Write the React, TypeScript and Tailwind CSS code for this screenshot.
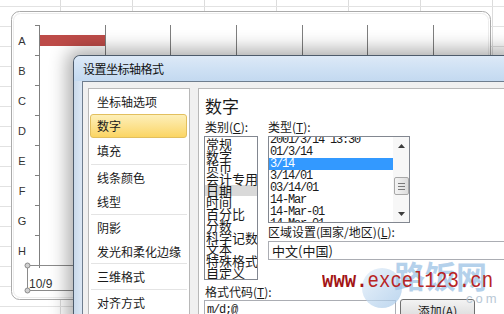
import React from 'react';

const navItems = [
  { label: '坐标轴选项', h: 'h-[24px]' },
  { label: '数字', h: 'h-[24px]', active: true },
  { label: '填充', h: 'h-[26px]', sep: true },
  { label: '线条颜色', h: 'h-[25px]' },
  { label: '线型', h: 'h-[24px]', sep: true },
  { label: '阴影', h: 'h-[25px]' },
  { label: '发光和柔化边缘', h: 'h-[23px]', sep: true },
  { label: '三维格式', h: 'h-[25px]', sep: true },
  { label: '对齐方式', h: 'h-[25px]' },
];

const categories = ['常规', '数字', '货币', '会计专用', '日期', '时间', '百分比', '分数', '科学记数', '文本', '特殊格式', '自定义'];

const types = ['2001/3/14 13:30', '01/3/14', '3/14', '3/14/01', '03/14/01', '14-Mar', '14-Mar-01', '14-Mar-01'];

const mono = "font-['Liberation_Mono',monospace]";

function ChartLayer() {
  const ticks = Array.from({ length: 9 }, (_, i) => 25 + i * 30);
  const labels = ['A', 'B', 'C', 'D', 'E', 'F', 'G', 'H'];
  const grid = [105, 170, 236, 302, 367, 433];
  const sheetCols = [60, 132, 204, 276, 348, 420, 492];
  const sheetRows = Array.from({ length: 16 }, (_, i) => 6 + i * 20);

  return (
    <svg className="absolute inset-0" width={504} height={314}>
      {sheetCols.map((x) => (
        <line key={`c${x}`} x1={x + 0.5} y1={0} x2={x + 0.5} y2={314} stroke="#dcdcdc" />
      ))}
      {sheetRows.map((y) => (
        <line key={`r${y}`} x1={0} y1={y + 0.5} x2={504} y2={y + 0.5} stroke="#e2e2e2" />
      ))}
      <rect x={11.5} y={11.5} width={479} height={288} rx={8} fill="#fff" stroke="#aaaaaa" />
      <rect x={13.5} y={13.5} width={475} height={284} rx={7} fill="none" stroke="#ececec" />
      {grid.map((x) => (
        <line key={x} x1={x + 0.5} y1={25} x2={x + 0.5} y2={265} stroke="#7f7f7f" />
      ))}
      <rect x={40} y={35} width={65} height={11} fill="#bd4b48" />
      <line x1={39.5} y1={25} x2={39.5} y2={268} stroke="#7f7f7f" />
      {ticks.map((y) => (
        <line key={y} x1={35} y1={y + 0.5} x2={40} y2={y + 0.5} stroke="#7f7f7f" />
      ))}
      {labels.map((l, i) => (
        <text key={l} x={22} y={45 + i * 30} fontSize={11} fill="#333" textAnchor="middle" fontFamily="Liberation Sans, sans-serif">
          {l}
        </text>
      ))}
      <line x1={27.5} y1={265.5} x2={110} y2={265.5} stroke="#8a8a8a" />
      <line x1={27.5} y1={290.5} x2={110} y2={290.5} stroke="#8a8a8a" />
      <line x1={27.5} y1={265} x2={27.5} y2={291} stroke="#8a8a8a" />
      <circle cx={27.5} cy={265.5} r={2.5} fill="#d0d0d0" stroke="#8a8a8a" />
      <circle cx={27.5} cy={290.5} r={2.5} fill="#d0d0d0" stroke="#8a8a8a" />
      <text x={29} y={288} fontSize={12} fill="#333" fontFamily="Liberation Sans, sans-serif">10/9</text>
    </svg>
  );
}

function UpArrow() {
  return (
    <svg width="7" height="4" viewBox="0 0 7 4"><path d="M0 4 L3.5 0 L7 4 Z" fill="#3c3c3c" /></svg>
  );
}

function DownArrow() {
  return (
    <svg width="7" height="4" viewBox="0 0 7 4"><path d="M0 0 L3.5 4 L7 0 Z" fill="#3c3c3c" /></svg>
  );
}

export default function App() {
  return (
    <div className="relative w-[504px] h-[314px] overflow-hidden bg-white font-['Noto_Sans_CJK_SC',sans-serif] text-[#1a1a1a]">
      <ChartLayer />

      {/* dialog */}
      <div className="absolute left-[73px] top-[55px] w-[440px] h-[270px] flex flex-col rounded-tl-[7px] border-l border-t border-[#4d5b6b] bg-[#cddff2] shadow-[0_0_18px_6px_rgba(0,0,0,0.32)] overflow-hidden">
        <div className="h-[25px] flex items-center pl-[9px] bg-gradient-to-b from-[#dde9f7] via-[#cfe1f4] to-[#c3d9f0] text-[12px] tracking-[-0.5px] text-[#111]">
          设置坐标轴格式
        </div>
        <div className="flex flex-1">
          <div className="w-[8px] bg-gradient-to-r from-[#c9d9ea] to-[#dbe7f4]" />
          <div className="flex flex-1 gap-[8px] pl-[5px] pt-[6px] bg-[#f0f0f0] border-t border-l border-[#6e7d8e]">
            {/* nav */}
            <div className="w-[102px] border border-[#b8b8b8] bg-white pt-px">
              {navItems.map((it) => (
                <div key={it.label}>
                  {it.active ? (
                    <div className={`${it.h} mx-px mr-[2px] flex items-center px-[6px] text-[12px] rounded-[3px] border border-[#e2bf5e] bg-gradient-to-b from-[#fdefb8] to-[#fbd562]`}>
                      {it.label}
                    </div>
                  ) : (
                    <div className={`${it.h} mx-px flex items-center px-[7px] text-[12px] whitespace-nowrap`}>
                      {it.label}
                    </div>
                  )}
                  {it.sep && <div className="h-px mx-[2px] bg-[#e4e4e4]" />}
                </div>
              ))}
            </div>

            {/* content */}
            <div className="flex-1 border border-[#b8b8b8] bg-white pl-[5px] pt-[7px]">
              <div className="pl-px text-[17px] leading-[20px]">数字</div>
              <div className="flex gap-[10px] mt-[4px]">
                <div className="w-[54px] shrink-0">
                  <div className="pl-px text-[12px] leading-[14px] whitespace-nowrap">
                    类别(<span className="underline">C</span>):
                  </div>
                  <div className="mt-[2px] w-[54px] h-[144px] border border-[#828790] overflow-hidden pt-[1px]">
                    {categories.map((c) => (
                      <div
                        key={c}
                        className={`h-[11.7px] leading-[11.7px] text-[13px] whitespace-nowrap pl-px ${c === '日期' ? 'bg-[#d9d9d9]' : ''}`}
                      >
                        {c}
                      </div>
                    ))}
                  </div>
                </div>
                <div className="flex-1">
                  <div className="text-[12px] leading-[14px]">
                    类型(<span className="underline">T</span>):
                  </div>
                  <div className="mt-[2px] w-[142px] h-[87px] border border-[#828790] flex overflow-hidden">
                    <div className="flex-1 overflow-hidden">
                      <div className="-mt-[3px]">
                        {types.map((t, i) => (
                          <div
                            key={i}
                            className={`h-[12px] leading-[12px] pl-px text-[12px] tracking-[-1.2px] whitespace-nowrap ${mono} ${i === 2 ? 'bg-[#3399ff] text-white' : ''}`}
                          >
                            {t}
                          </div>
                        ))}
                      </div>
                    </div>
                    <div className="w-[16px] bg-[#f7f7f7] flex flex-col items-center">
                      <div className="h-[17px] flex items-center justify-center"><UpArrow /></div>
                      <div className="mt-[23px] w-[15px] h-[18px] rounded-[2px] border border-[#a8a8a8] bg-gradient-to-r from-[#f4f4f4] to-[#dcdcdc] flex flex-col items-center justify-center gap-[2px]">
                        <div className="w-[7px] h-px bg-[#7a7a7a]" />
                        <div className="w-[7px] h-px bg-[#7a7a7a]" />
                        <div className="w-[7px] h-px bg-[#7a7a7a]" />
                      </div>
                      <div className="mt-auto h-[17px] flex items-center justify-center"><DownArrow /></div>
                    </div>
                  </div>
                  <div className="mt-[2px] text-[12px] leading-[14px] whitespace-nowrap">
                    区域设置(国家/地区)(<span className="underline">L</span>):
                  </div>
                  <div className="mt-[2px] h-[19px] border border-[#abadb3] flex items-center pl-[3px] text-[13px] whitespace-nowrap">
                    中文(中国)
                  </div>
                </div>
              </div>
              <div className="mt-[5px] pl-px text-[12px] leading-[14px]">
                格式代码(<span className="underline">T</span>):
              </div>
              <div className="mt-px flex items-start gap-[4px]">
                <div className={`w-[192px] h-[20px] border border-[#abadb3] pl-[2px] pt-[2px] text-[12px] leading-[14px] tracking-[-1.2px] ${mono}`}>
                  m/d;@
                </div>
                <div className="-mt-px w-[75px] h-[23px] rounded-[3px] border border-[#707070] bg-gradient-to-b from-[#f3f3f3] to-[#d8d8d8] flex items-center justify-center text-[12px]">
                  添加(<span className="underline">A</span>)
                </div>
              </div>
            </div>
          </div>
        </div>
      </div>

      {/* watermark */}
      <div className="absolute left-[362px] top-[268px] w-[40px] h-[40px] rounded-full bg-gradient-to-br from-[#e3eef9] to-[#9fc4e7] opacity-70" />
      <div className="absolute left-[394px] top-[257px] text-[31px] leading-[36px] font-bold text-[#9cc2e5] opacity-75 whitespace-nowrap">
        路饭网
      </div>
      <div className="absolute left-[466px] top-[291px] text-[13px] leading-[16px] tracking-[3px] text-[#b9c8d6] font-['Liberation_Sans',sans-serif]">
        com
      </div>
      <div className={`absolute left-[322px] top-[270px] text-[19px] leading-none whitespace-nowrap origin-top scale-y-[1.2] ${mono}`}>
        <span className="font-bold text-[#a31515]">www.</span>
        <span className="text-[#b82525]">excel123.cn</span>
      </div>
    </div>
  );
}
